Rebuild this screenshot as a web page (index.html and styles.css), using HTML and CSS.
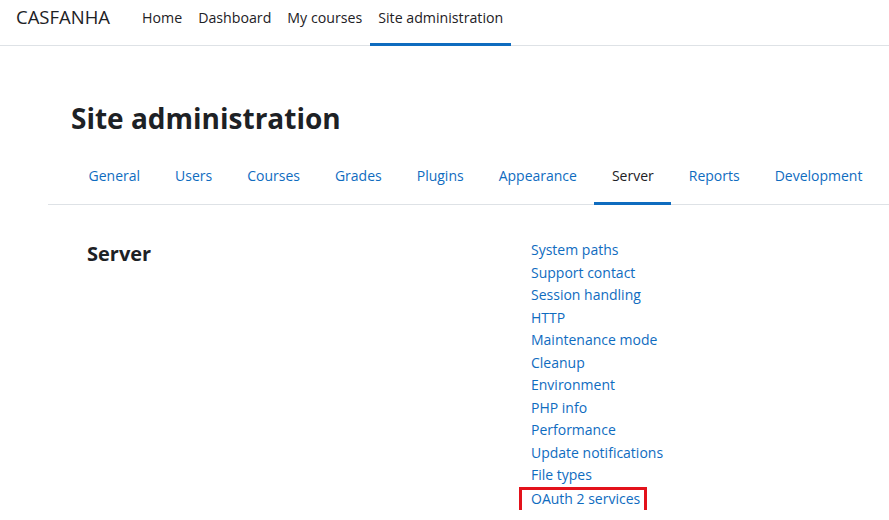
FILE: index.html
```html
<!DOCTYPE html>
<html lang="en">
<head>
<meta charset="utf-8">
<title>Site administration</title>
<link rel="stylesheet" href="styles.css">
</head>
<body>
<header class="navbar">
  <a class="brand" href="#">CASFANHA</a>
  <nav class="primary">
    <a href="#">Home</a>
    <a href="#">Dashboard</a>
    <a href="#">My courses</a>
    <a class="active" href="#">Site administration</a>
  </nav>
</header>
<main class="page">
  <h1 class="title">Site administration</h1>
  <nav class="tabs">
    <a href="#">General</a>
    <a href="#">Users</a>
    <a href="#">Courses</a>
    <a href="#">Grades</a>
    <a href="#">Plugins</a>
    <a href="#">Appearance</a>
    <a class="active" href="#">Server</a>
    <a href="#">Reports</a>
    <a href="#">Development</a>
  </nav>
  <section class="category">
    <h2 class="cat-title">Server</h2>
    <ul class="links">
      <li><a href="#">System paths</a></li>
      <li><a href="#">Support contact</a></li>
      <li><a href="#">Session handling</a></li>
      <li><a href="#">HTTP</a></li>
      <li><a href="#">Maintenance mode</a></li>
      <li><a href="#">Cleanup</a></li>
      <li><a href="#">Environment</a></li>
      <li><a href="#">PHP info</a></li>
      <li><a href="#">Performance</a></li>
      <li><a href="#">Update notifications</a></li>
      <li><a href="#">File types</a></li>
      <li><a class="highlight" href="#">OAuth 2 services</a></li>
    </ul>
  </section>
</main>
</body>
</html>
```

FILE: styles.css
```css
html, body {
  margin: 0;
  padding: 0;
  background: #fff;
}
body {
  font-family: "Open Sans", "Noto Sans", sans-serif;
  color: #1d2125;
  font-size: 14px;
}
a {
  text-decoration: none;
}
.navbar {
  display: flex;
  align-items: stretch;
  height: 45px;
  border-bottom: 1px solid #dee2e6;
  padding-left: 16px;
}
.brand {
  display: flex;
  align-items: center;
  color: #1d2125;
  font-size: 18.5px;
  margin-right: 24px;
  padding-bottom: 12px;
}
.primary {
  display: flex;
  align-items: stretch;
}
.primary a {
  display: flex;
  align-items: center;
  padding: 0 8px 9px;
  font-size: 14.2px;
  color: #1d2125;
  border-bottom: 3px solid transparent;
  margin-bottom: -1px;
}
.primary a.active {
  border-bottom-color: #0f6cbf;
}
.page {
  padding-left: 48px;
}
.title {
  margin: 0;
  padding: 52px 0 0 23px;
  font-size: 28px;
  font-weight: 700;
  line-height: 40px;
}
.tabs {
  display: flex;
  margin-top: 14px;
  padding-left: 23px;
  border-bottom: 1px solid #dee2e6;
}
.tabs a {
  color: #0f6cbf;
  padding: 13px 17.5px 15px;
  line-height: 22px;
  border-bottom: 3px solid transparent;
  margin-bottom: -1px;
}
.tabs a.active {
  color: #1d2125;
  border-bottom-color: #0f6cbf;
}
.category {
  display: grid;
  grid-template-columns: 444px 1fr;
  padding-top: 29px;
}
.cat-title {
  margin: 0;
  padding: 8px 0 0 39px;
  font-size: 20px;
  font-weight: 700;
  line-height: 24px;
}
.links {
  list-style: none;
  margin: 0;
  padding: 5px 0 0 39px;
}
.links li {
  line-height: 22.5px;
}
.links a {
  color: #0f6cbf;
}
.links a.highlight {
  display: inline-block;
  vertical-align: top;
  outline: 3px solid #e3121b;
  outline-offset: 0;
  padding: 0 4px 3px 9px;
  margin-left: -9px;
  line-height: 17px;
  margin-top: 3px;
}
```
